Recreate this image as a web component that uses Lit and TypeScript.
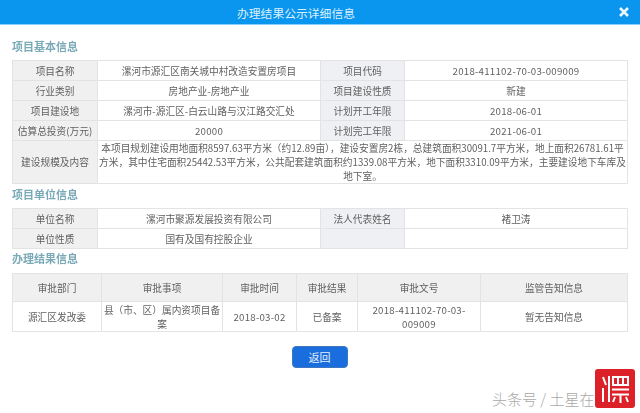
import { LitElement, html, css } from "lit";
import { customElement } from "lit/decorators.js";

const basic: [string, string, string, string][] = [
  ["项目名称", "漯河市源汇区南关城中村改造安置房项目", "项目代码", "2018-411102-70-03-009009"],
  ["行业类别", "房地产业-房地产业", "项目建设性质", "新建"],
  ["项目建设地", "漯河市-源汇区-白云山路与汉江路交汇处", "计划开工年限", "2018-06-01"],
  ["估算总投资(万元)", "20000", "计划完工年限", "2021-06-01"],
];
const results = ["审批部门", "审批事项", "审批时间", "审批结果", "审批文号", "监管告知信息"];

@customElement("app-root")
export class AppRoot extends LitElement {
  static styles = css`
    :host {
      display: block;
      position: relative;
      width: 640px;
      height: 413px;
      overflow: hidden;
      background: #fff;
      font-family: "Noto Sans CJK SC", "Liberation Sans", sans-serif;
      font-size: 9.7px;
      color: #5f5f5f;
    }
    .bar {
      display: flex;
      align-items: center;
      justify-content: center;
      position: relative;
      height: 24px;
      padding-right: 48px;
      box-sizing: content-box;
      background: #0a96ee;
      border-bottom: 1px solid #86d2fb;
      color: #dcf0fc;
      font-size: 11.8px;
    }
    .close {
      position: absolute;
      right: 11px;
      top: 7px;
      width: 10px;
      height: 10px;
    }
    .body {
      padding: 0 13px 0 12px;
      filter: blur(0.3px);
    }
    h2 {
      margin: 0;
      display: flex;
      align-items: center;
      font-size: 11px;
      font-weight: 700;
      color: #7aa9b8;
    }
    .t1 { height: 35px; padding-top: 7px; box-sizing: border-box; }
    .t2 { height: 24px; padding-bottom: 5px; box-sizing: border-box; }
    .t3 { height: 24px; padding-bottom: 7px; box-sizing: border-box; }
    table {
      width: 615px;
      table-layout: fixed;
      border-collapse: collapse;
    }
    td, th {
      border: 1px solid #e3e3e3;
      padding: 0;
      text-align: center;
      font-weight: 400;
      line-height: 14px;
      height: 19px;
      white-space: nowrap;
      overflow: hidden;
    }
    .num { letter-spacing: 0.25px; }
    .lab { background: #f0f0f0; }
    .lab2 { background: #eef0f3; }
    .desc { height: 40px; }
    .h th { background: #f0f0f0; height: 27px; }
    .r td { height: 29px; }
    .foot {
      display: flex;
      justify-content: center;
      padding-top: 14px;
    }
    button {
      width: 56px;
      height: 22px;
      padding: 0;
      border: 1px solid #3f76bd;
      border-radius: 4px;
      background: #1a6ddd;
      color: #e6f1fb;
      font: inherit;
      font-size: 11px;
    }
    .mark {
      position: absolute;
      left: 492px;
      top: 388px;
      font-size: 15px;
      line-height: 22px;
      font-weight: 300;
      color: #a9a9a9;
      white-space: nowrap;
    }
    .logo {
      position: absolute;
      left: 595px;
      top: 369px;
      width: 40px;
      height: 39px;
    }
  `;

  render() {
    return html`
      <div class="bar">
        办理结果公示详细信息
        <svg class="close" viewBox="0 0 10 10">
          <path d="M1 1L9 9M9 1L1 9" stroke="#eaf6fe" stroke-width="2.6" fill="none" />
        </svg>
      </div>
      <div class="body">
        <h2 class="t1">项目基本信息</h2>
        <table>
          <colgroup><col style="width:85px" /><col style="width:223px" /><col style="width:84px" /><col style="width:223px" /></colgroup>
          ${basic.map(
            (r, i) => html`<tr>
              <td class="lab">${r[0]}</td><td class=${i === 3 ? "num" : ""}>${r[1]}</td>
              <td class="lab2">${r[2]}</td><td class=${i === 1 ? "" : "num"}>${r[3]}</td>
            </tr>`
          )}
          <tr>
            <td class="lab desc">建设规模及内容</td>
            <td colspan="3">本项目规划建设用地面积8597.63平方米（约12.89亩），建设安置房2栋，总建筑面积30091.7平方米，地上面积26781.61平<br />方米，其中住宅面积25442.53平方米，公共配套建筑面积约1339.08平方米，地下面积3310.09平方米，主要建设地下车库及<br />地下室。</td>
          </tr>
        </table>
        <h2 class="t2">项目单位信息</h2>
        <table>
          <colgroup><col style="width:85px" /><col style="width:223px" /><col style="width:84px" /><col style="width:223px" /></colgroup>
          <tr><td class="lab">单位名称</td><td>漯河市聚源发展投资有限公司</td><td class="lab2">法人代表姓名</td><td>褚卫涛</td></tr>
          <tr><td class="lab">单位性质</td><td>国有及国有控股企业</td><td class="lab2"></td><td></td></tr>
        </table>
        <h2 class="t3">办理结果信息</h2>
        <table>
          <colgroup><col style="width:89px" /><col style="width:121px" /><col style="width:74px" /><col style="width:61px" /><col style="width:123px" /><col style="width:147px" /></colgroup>
          <tr class="h">${results.map((t) => html`<th>${t}</th>`)}</tr>
          <tr class="r">
            <td>源汇区发改委</td>
            <td>县（市、区）属内资项目备<br />案</td>
            <td class="num">2018-03-02</td>
            <td>已备案</td>
            <td class="num">2018-411102-70-03-<br />009009</td>
            <td>暂无告知信息</td>
          </tr>
        </table>
        <div class="foot"><button>返回</button></div>
      </div>
      <div class="mark">头条号 / 土星在</div>
      <svg class="logo" viewBox="0 0 40 39">
        <rect width="40" height="39" rx="3" fill="#dc2129" />
        <g stroke="#fff" stroke-width="2" fill="none">
          <path d="M8 8L11 16M8 19V33M14 7V33" />
          <path d="M18 8H33V16H18ZM23 8V16M28 8V16M17 20.500H34M17 25.500H34M25.500 25V34M20 28L18 33M31 28L33 33" />
        </g>
      </svg>
    `;
  }
}
